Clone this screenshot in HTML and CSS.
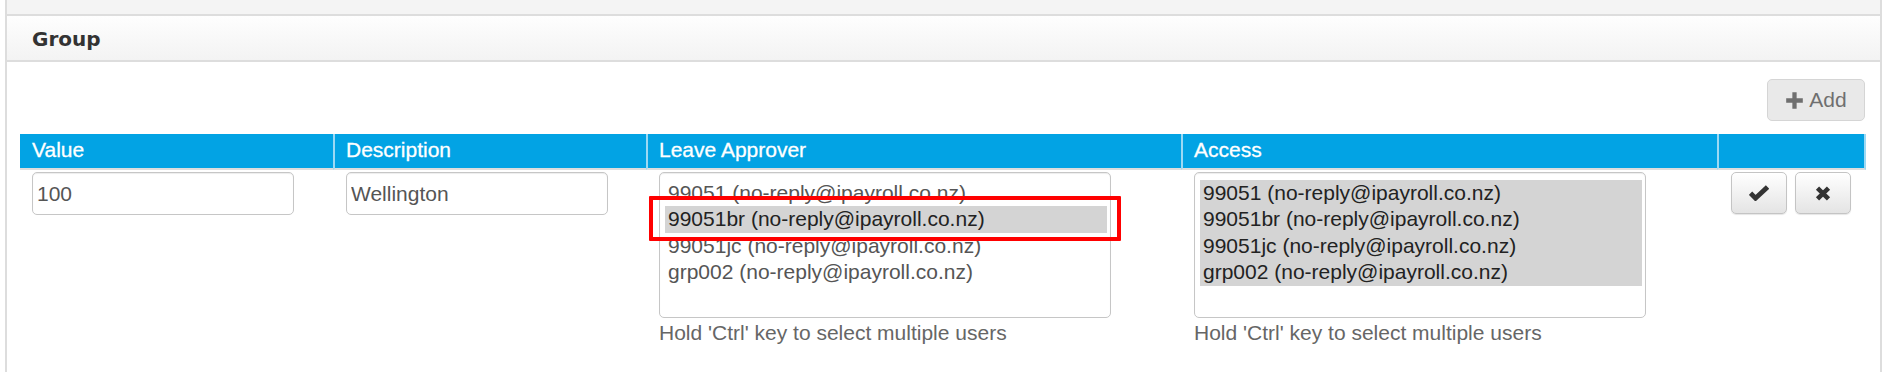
FILE: index.html
```html
<!DOCTYPE html>
<html lang="en">
<head>
    <meta charset="UTF-8">
    <title>Group</title>
    <link rel="stylesheet" href="styles.css">
</head>
<body>
    <div class="panel">
        <div class="panel-top"></div>
        <div class="panel-heading">
            <h3>Group</h3>
        </div>
        <div class="panel-body">
            <div class="toolbar">
                <button class="btn btn-add" disabled>
                    <svg class="icon-plus" width="19" height="19" viewBox="0 0 16 16"><path d="M6.2 1h3.6v5.2H15v3.6H9.8V15H6.2V9.8H1V6.2h5.2z" fill="currentColor"/></svg>
                    Add
                </button>
            </div>
            <table class="grid">
                <colgroup>
                    <col class="col-value">
                    <col class="col-desc">
                    <col class="col-approver">
                    <col class="col-access">
                    <col class="col-actions">
                </colgroup>
                <thead>
                    <tr>
                        <th>Value</th>
                        <th>Description</th>
                        <th>Leave Approver</th>
                        <th>Access</th>
                        <th></th>
                    </tr>
                </thead>
                <tbody>
                    <tr>
                        <td><input class="field" type="text" value="100"></td>
                        <td><input class="field" type="text" value="Wellington"></td>
                        <td>
                            <div class="listbox-wrap">
                                <ul class="listbox">
                                    <li>99051 (no-reply@ipayroll.co.nz)</li>
                                    <li class="selected">99051br (no-reply@ipayroll.co.nz)</li>
                                    <li>99051jc (no-reply@ipayroll.co.nz)</li>
                                    <li>grp002 (no-reply@ipayroll.co.nz)</li>
                                </ul>
                                <span class="callout"></span>
                            </div>
                            <p class="help">Hold 'Ctrl' key to select multiple users</p>
                        </td>
                        <td>
                            <div class="listbox-wrap">
                                <ul class="listbox">
                                    <li class="selected">99051 (no-reply@ipayroll.co.nz)</li>
                                    <li class="selected">99051br (no-reply@ipayroll.co.nz)</li>
                                    <li class="selected">99051jc (no-reply@ipayroll.co.nz)</li>
                                    <li class="selected">grp002 (no-reply@ipayroll.co.nz)</li>
                                </ul>
                            </div>
                            <p class="help">Hold 'Ctrl' key to select multiple users</p>
                        </td>
                        <td>
                            <div class="actions">
                                <button class="btn btn-icon" title="Save">
                                    <svg width="20" height="16" viewBox="0 0 20 16"><path d="M1.5 8.2l5 5L18.5 2" fill="none" stroke="currentColor" stroke-width="4.8"/></svg>
                                </button>
                                <button class="btn btn-icon" title="Cancel">
                                    <svg width="16" height="15" viewBox="0 0 16 15"><path d="M2.5 2.2l11 10.6M13.5 2.2l-11 10.6" fill="none" stroke="currentColor" stroke-width="4.6"/></svg>
                                </button>
                            </div>
                        </td>
                    </tr>
                </tbody>
            </table>
        </div>
    </div>
</body>
</html>
```

FILE: styles.css
```css
body {
    margin: 0;
    height: 372px;
    overflow: hidden;
    background-color: #fff;
    font-family: "Liberation Sans", Arial, sans-serif;
    font-size: 21px;
    color: #555;
}

.panel {
    margin-left: 5px;
    width: 1877px;
    height: 372px;
    box-sizing: border-box;
    border-left: 2px solid #ddd;
    border-right: 2px solid #ddd;
}

.panel-top {
    height: 14px;
    background-color: #f4f4f4;
    border-bottom: 2px solid #ddd;
}

.panel-heading {
    height: 44px;
    background: linear-gradient(to bottom, #fefefe 0%, #f3f3f3 100%);
    border-bottom: 2px solid #ddd;
}

    .panel-heading h3 {
        margin: 0;
        padding: 3px 0 0 25px;
        font-family: "DejaVu Sans", Verdana, sans-serif;
        font-size: 20px;
        font-weight: bold;
        line-height: 41px;
        color: #333;
    }

.panel-body {
    padding: 17px 14px 0 13px;
}

.toolbar {
    display: flex;
    justify-content: flex-end;
    padding-right: 1px;
    margin-bottom: 13px;
}

.btn {
    display: inline-flex;
    align-items: center;
    justify-content: center;
    gap: 5px;
    height: 42px;
    box-sizing: border-box;
    border: 1px solid #c4c4c4;
    border-radius: 5px;
    background: linear-gradient(to bottom, #fff 0%, #e4e4e4 100%);
    box-shadow: inset 0 1px 0 rgba(255, 255, 255, 0.15), 0 1px 1px rgba(0, 0, 0, 0.1);
    font-family: "Liberation Sans", Arial, sans-serif;
    font-size: 21px;
    color: #333;
    padding: 0;
    cursor: pointer;
}

.btn-add {
    width: 98px;
    padding-bottom: 1px;
    background: #e0e0e0;
    opacity: 0.7;
    box-shadow: none;
    cursor: default;
}

    .btn-add .icon-plus {
        margin-top: 1px;
    }

.btn-icon {
    width: 56px;
}

.grid {
    width: 1846px;
    table-layout: fixed;
    border-collapse: separate;
    border-spacing: 0;
}

.col-value { width: 313px; }
.col-desc { width: 313px; }
.col-approver { width: 535px; }
.col-access { width: 536px; }
.col-actions { width: 149px; }

.grid th {
    height: 34px;
    box-sizing: border-box;
    padding: 0 0 2px 12px;
    background-color: #02a3e4;
    border-bottom: 2px solid #ddd;
    color: #fff;
    font-weight: normal;
    text-align: left;
    line-height: 32px;
    -webkit-text-stroke: 0.3px #fff;
}

    .grid th + th {
        border-left: 2px solid #9cd9f4;
        padding-left: 11px;
    }

    .grid th:last-child {
        border-right: 2px solid #9cd9f4;
    }

.grid td {
    padding: 2px 0 0 12px;
    vertical-align: top;
}

    .grid td + td {
        padding-left: 13px;
    }

.field {
    display: block;
    width: 262px;
    height: 43px;
    box-sizing: border-box;
    padding: 0 4px;
    border: 1px solid #c6c6c6;
    border-radius: 5px;
    box-shadow: inset 0 1px 1px rgba(0, 0, 0, 0.075);
    font-family: "Liberation Sans", Arial, sans-serif;
    font-size: 21px;
    color: #555;
}

.listbox-wrap {
    position: relative;
    width: 452px;
}

.listbox {
    list-style: none;
    margin: 0;
    height: 146px;
    box-sizing: border-box;
    padding: 7px 3px 0 5px;
    border: 1px solid #c6c6c6;
    border-radius: 5px;
    box-shadow: inset 0 1px 1px rgba(0, 0, 0, 0.075);
}

    .listbox li {
        height: 26.4px;
        line-height: 26.4px;
        padding: 0 3px;
        color: #555;
        white-space: nowrap;
    }

        .listbox li.selected {
            background-color: #d4d4d4;
            color: #222;
        }

.callout {
    position: absolute;
    left: -10px;
    right: -10px;
    top: 24px;
    height: 45px;
    box-sizing: border-box;
    border: 4px solid #f00;
    border-radius: 1px;
}

.help {
    margin: 3px 0 0;
    line-height: 24px;
    color: #666;
}

.actions {
    display: flex;
    gap: 8px;
    padding-left: 1px;
}
```
